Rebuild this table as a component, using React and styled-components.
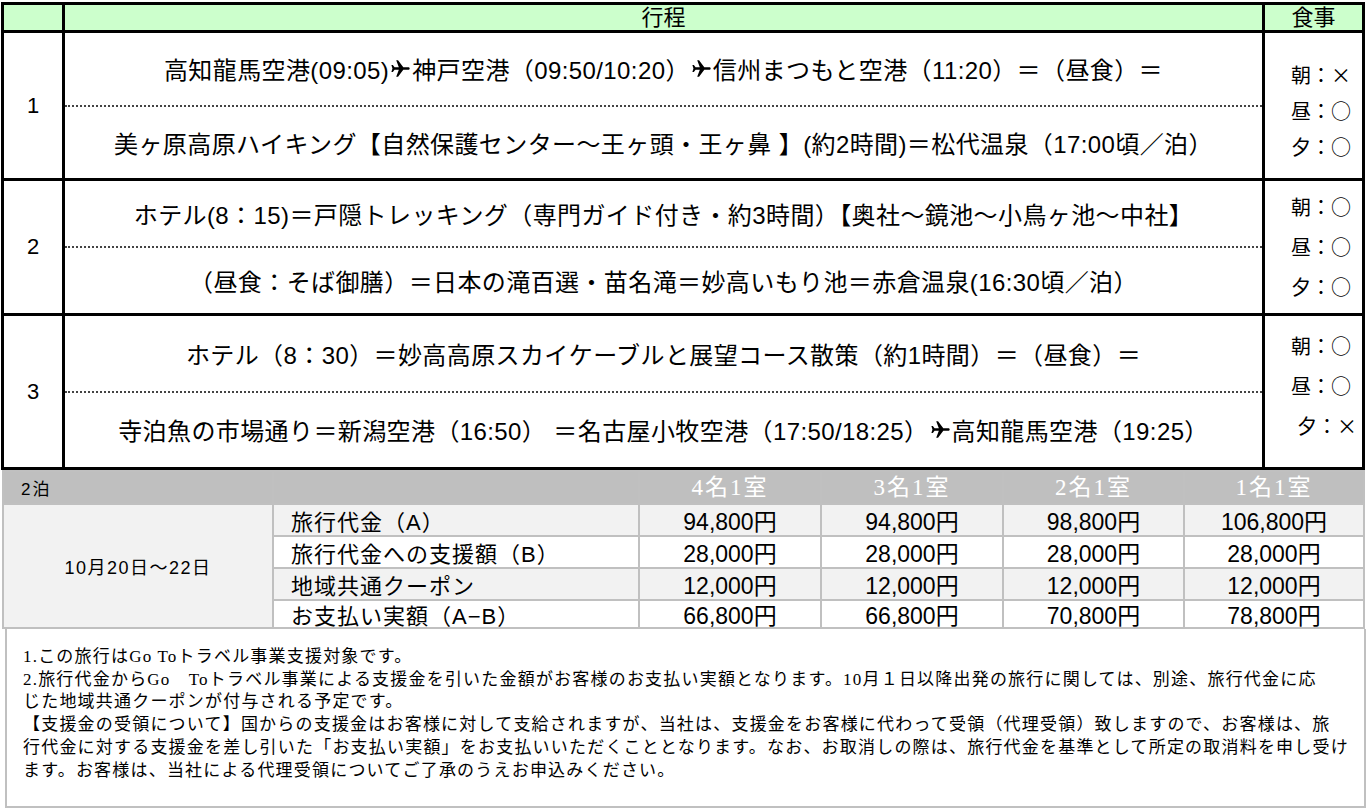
import styled, { createGlobalStyle } from 'styled-components'

const GlobalStyle = createGlobalStyle`
  html, body {
    margin: 0;
    padding: 0;
    background: #fff;
  }
  body {
    font-family: "Liberation Sans", "Noto Sans CJK JP", sans-serif;
    color: #000;
  }
`

const Page = styled.div`
  padding: 2px 0 0 1px;
`

const Itinerary = styled.div`
  display: grid;
  grid-template-columns: 58px 1197px 97px;
  grid-template-rows: 25px 145px 132px 151px;
  gap: 3px;
  width: fit-content;
  border: 3px solid #000;
  background: #000;
`

const HeadCell = styled.div`
  background: #ccffcc;
  font-size: 22px;
  line-height: 25px;
  text-align: center;
  overflow: hidden;
`

const DayCell = styled.div`
  background: #fff;
  display: flex;
  align-items: center;
  justify-content: center;
  font-size: 22px;
`

const RouteCell = styled.div`
  background: #fff;
  display: flex;
  flex-direction: column;
`

const RouteLine = styled.div`
  flex: 1;
  display: flex;
  align-items: center;
  justify-content: center;
  font-size: 24px;
  letter-spacing: 0.4px;
  white-space: nowrap;

  & + & {
    border-top: 2px dotted #444;
  }
`

const MealCell = styled.div`
  background: #fff;
  display: flex;
  flex-direction: column;
  justify-content: center;
  padding: ${p => p.$pad};
  font-family: "Noto Sans CJK JP", sans-serif;
  font-size: 20px;
`

const MealItem = styled.div`
  line-height: ${p => p.$spacing}px;
  padding-left: ${p => (p.$indent ? 32 : 26)}px;
  white-space: nowrap;
`

const PlaneIcon = styled.svg`
  width: 21px;
  height: 21px;
  margin: 0 1px;
  vertical-align: -3px;
`

const PriceGrid = styled.div`
  display: grid;
  grid-template-columns: 268px 364px 180px 180px 179px 178px;
  grid-template-rows: 31px 30px 30px 30px 26px;
  gap: 2px;
  padding: 2px;
  margin-left: 1px;
  width: fit-content;
  background: #c0c0c0;
`

const NightsCell = styled.div`
  background: #bfbfbf;
  display: flex;
  align-items: center;
  padding-left: 17px;
  font-size: 17px;
  letter-spacing: 2px;
`

const BlankHead = styled.div`
  background: #bfbfbf;
`

const RoomHead = styled.div`
  background: #bfbfbf;
  display: flex;
  align-items: flex-end;
  justify-content: center;
  color: #fff;
  font-family: "Liberation Serif", "Noto Sans CJK JP", serif;
  font-size: 23px;
  line-height: 30px;
  letter-spacing: 2px;
`

const DateCell = styled.div`
  grid-row: 2 / span 4;
  background: #f2f2f2;
  display: flex;
  align-items: center;
  justify-content: center;
  font-size: 18px;
  letter-spacing: 1.5px;
`

const LabelCell = styled.div`
  background: ${p => (p.$shade ? '#f2f2f2' : '#fff')};
  display: flex;
  align-items: center;
  padding-left: 17px;
  font-size: 22px;
  letter-spacing: 1px;
  white-space: nowrap;
`

const ValueCell = styled.div`
  background: ${p => (p.$shade ? '#f2f2f2' : '#fff')};
  display: flex;
  align-items: center;
  justify-content: center;
  font-size: 23px;
`

const Notes = styled.div`
  margin-left: 4px;
  width: 1361px;
  height: 179px;
  box-sizing: border-box;
  border: 2px solid #c0c0c0;
  border-top: none;
  padding: 17px 0 0 16px;
  font-family: "Liberation Serif", "Noto Sans CJK JP", serif;
  font-size: 17px;
  letter-spacing: 1.2px;
  line-height: 22.7px;
`

const NoteLine = styled.div`
  white-space: nowrap;
`

const Plane = () => (
  <PlaneIcon viewBox="0 0 24 24">
    <path
      d="M22.5 12c0-.9-.8-1.4-1.6-1.4H15.2L9.2 2.5H7.1l3 8.1H5.2L3.3 8H1.6l1.2 4-1.2 4h1.7l1.9-2.6h4.9l-3 8.1h2.1l6-8.1h5.7c.8 0 1.6-.5 1.6-1.4z"
      fill="#000"
    />
  </PlaneIcon>
)

const days = [
  {
    no: '1',
    lines: [
      <>高知龍馬空港(09:05)<Plane />神戸空港（09:50/10:20）<Plane />信州まつもと空港（11:20）＝（昼食）＝</>,
      <>美ヶ原高原ハイキング【自然保護センター～王ヶ頭・王ヶ鼻 】(約2時間)＝松代温泉（17:00頃／泊）</>,
    ],
    meals: ['朝：×', '昼：○', '夕：○'],
    spacing: 36,
    pad: '10px 0 0 0',
  },
  {
    no: '2',
    lines: [
      <>ホテル(8：15)＝戸隠トレッキング（専門ガイド付き・約3時間）【奥社～鏡池～小鳥ヶ池～中社】</>,
      <>（昼食：そば御膳）＝日本の滝百選・苗名滝＝妙高いもり池＝赤倉温泉(16:30頃／泊）</>,
    ],
    meals: ['朝：○', '昼：○', '夕：○'],
    spacing: 40,
    pad: '0',
  },
  {
    no: '3',
    lines: [
      <>ホテル（8：30）＝妙高高原スカイケーブルと展望コース散策（約1時間）＝（昼食）＝</>,
      <>寺泊魚の市場通り＝新潟空港（16:50） ＝名古屋小牧空港（17:50/18:25）<Plane />高知龍馬空港（19:25）</>,
    ],
    meals: ['朝：○', '昼：○', '夕：×'],
    spacing: 40,
    pad: '0 0 12px 0',
    indentLast: true,
  },
]

const rooms = ['4名1室', '3名1室', '2名1室', '1名1室']

const priceRows = [
  { label: '旅行代金（A）', values: ['94,800円', '94,800円', '98,800円', '106,800円'] },
  { label: '旅行代金への支援額（B）', values: ['28,000円', '28,000円', '28,000円', '28,000円'] },
  { label: '地域共通クーポン', values: ['12,000円', '12,000円', '12,000円', '12,000円'] },
  { label: 'お支払い実額（A−B）', values: ['66,800円', '66,800円', '70,800円', '78,800円'] },
]

const notes = [
  '1.この旅行はGo Toトラベル事業支援対象です。',
  '2.旅行代金からGo　Toトラベル事業による支援金を引いた金額がお客様のお支払い実額となります。10月１日以降出発の旅行に関しては、別途、旅行代金に応',
  'じた地域共通クーポンが付与される予定です。',
  '【支援金の受領について】国からの支援金はお客様に対して支給されますが、当社は、支援金をお客様に代わって受領（代理受領）致しますので、お客様は、旅',
  '行代金に対する支援金を差し引いた「お支払い実額」をお支払いいただくこととなります。なお、お取消しの際は、旅行代金を基準として所定の取消料を申し受け',
  'ます。お客様は、当社による代理受領についてご了承のうえお申込みください。',
]

export default function App() {
  return (
    <>
      <GlobalStyle />
      <Page>
        <Itinerary>
          <HeadCell />
          <HeadCell>行程</HeadCell>
          <HeadCell>食事</HeadCell>
          {days.map(day => (
            <>
              <DayCell key={`d${day.no}`}>{day.no}</DayCell>
              <RouteCell key={`r${day.no}`}>
                {day.lines.map((line, i) => (
                  <RouteLine key={i}>{line}</RouteLine>
                ))}
              </RouteCell>
              <MealCell key={`m${day.no}`} $pad={day.pad}>
                {day.meals.map((meal, i) => (
                  <MealItem
                    key={meal + i}
                    $spacing={day.spacing}
                    $indent={day.indentLast && i === 2}
                  >
                    {meal}
                  </MealItem>
                ))}
              </MealCell>
            </>
          ))}
        </Itinerary>

        <PriceGrid>
          <NightsCell>2泊</NightsCell>
          <BlankHead />
          {rooms.map(room => (
            <RoomHead key={room}>{room}</RoomHead>
          ))}
          <DateCell>10月20日～22日</DateCell>
          {priceRows.map((row, i) => (
            <>
              <LabelCell key={row.label} $shade={i % 2 === 0}>{row.label}</LabelCell>
              {row.values.map((v, j) => (
                <ValueCell key={row.label + j} $shade={i % 2 === 0}>{v}</ValueCell>
              ))}
            </>
          ))}
        </PriceGrid>

        <Notes>
          {notes.map(n => (
            <NoteLine key={n}>{n}</NoteLine>
          ))}
        </Notes>
      </Page>
    </>
  )
}
